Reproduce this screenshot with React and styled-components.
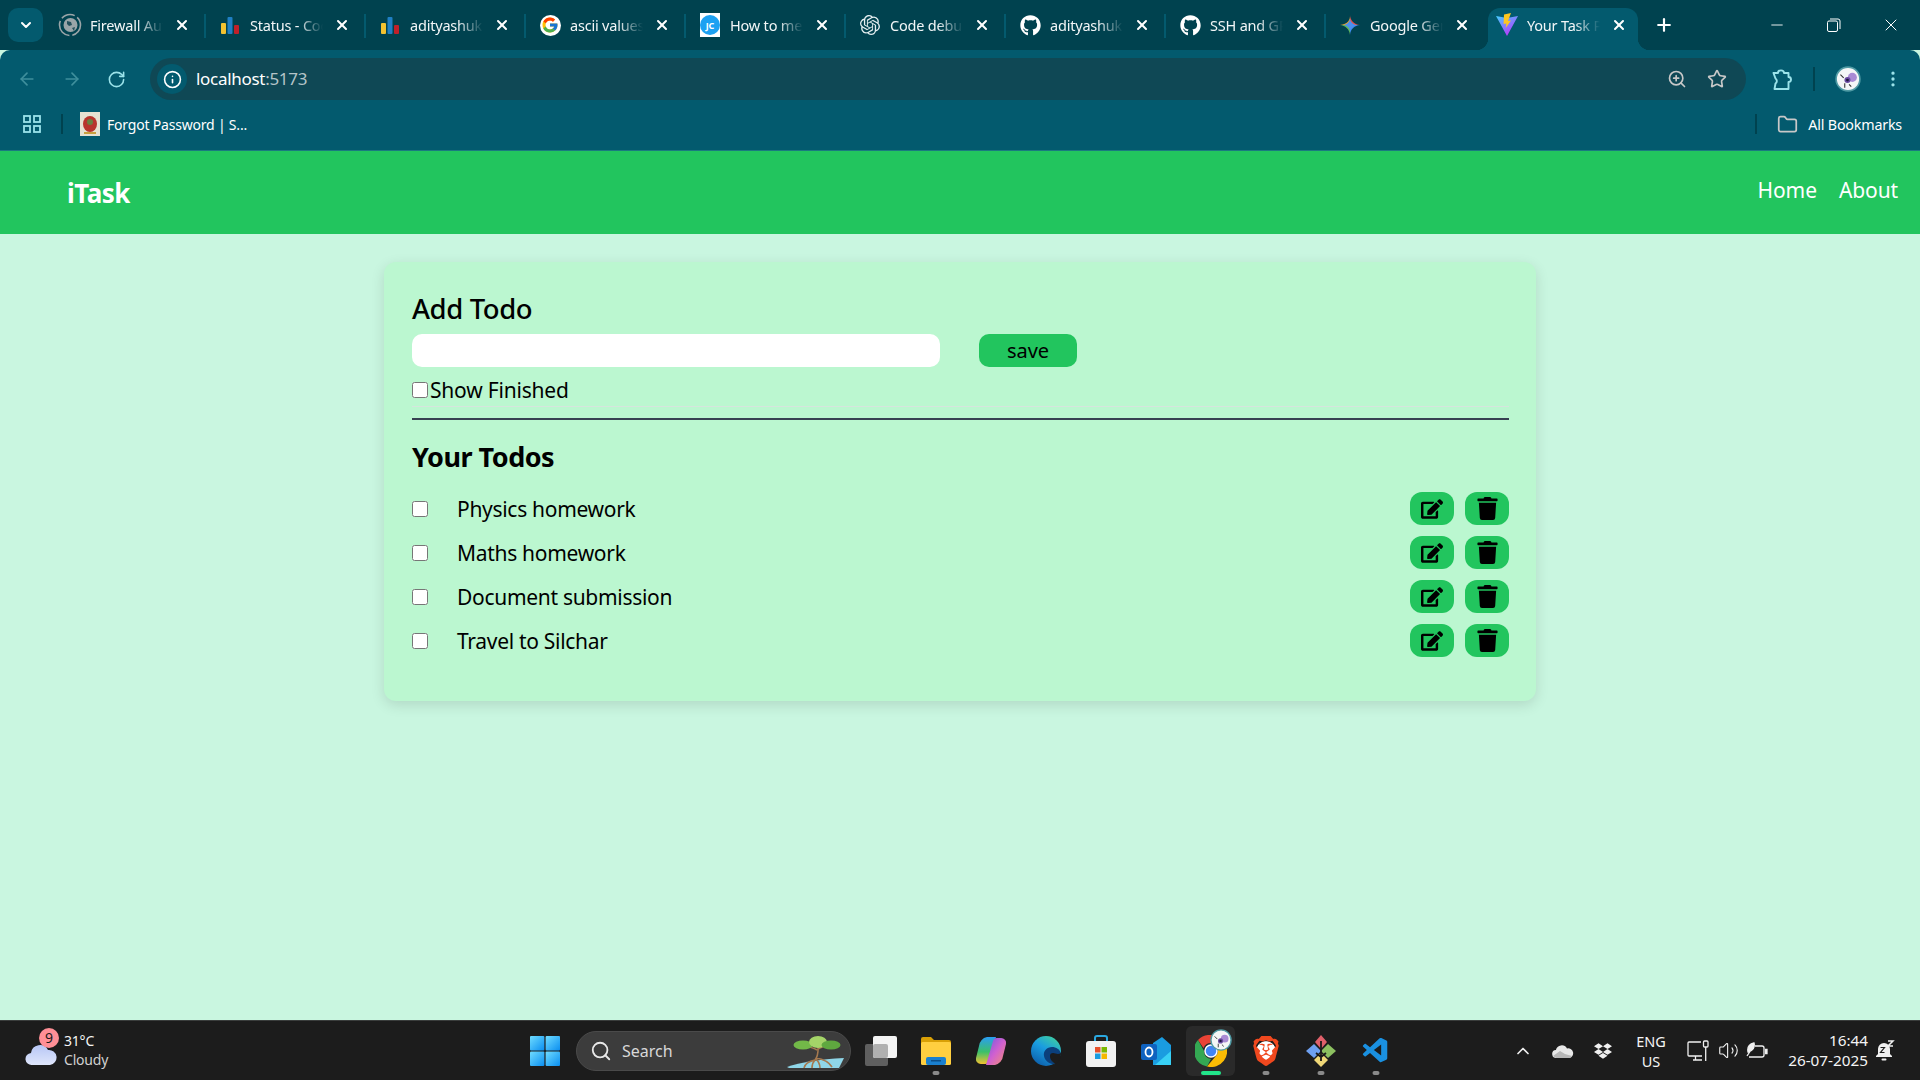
import styled, { createGlobalStyle } from 'styled-components';
import { FaGithub, FaEdit, FaTrash, FaDropbox } from 'react-icons/fa';
import { FcGoogle } from 'react-icons/fc';
import { SiOpenai, SiBrave } from 'react-icons/si';
import { VscVscode } from 'react-icons/vsc';
import {
  ArrowLeft,
  ArrowRight,
  RotateCw,
  Info,
  ZoomIn,
  Star,
  EllipsisVertical,
  Folder,
  X,
  Plus,
  Minus,
  ChevronDown,
  ChevronUp,
  Search,
  Volume2,
} from 'lucide-react';

const GlobalStyle = createGlobalStyle`
  html, body {
    margin: 0;
    padding: 0;
    height: 100%;
    overflow: hidden;
  }
  * {
    box-sizing: border-box;
  }
  body {
    font-family: "Noto Sans", "Open Sans", "Liberation Sans", sans-serif;
  }
`;

const FirewallIcon = () => (
  <svg width="24" height="24" viewBox="0 0 24 24">
    <circle cx="12" cy="12" r="10.5" fill="none" stroke="#9aa5a8" strokeWidth="1.6" strokeDasharray="14 3 20 3" />
    <circle cx="12.5" cy="12" r="7" fill="#9aa5a8" />
    <path d="M9 8l4 1 1 3-3 1-2-2zM14 15l3-1-1 4z" fill="#24505c" />
  </svg>
);

const BarsIcon = () => (
  <svg width="20" height="20" viewBox="0 0 20 20">
    <rect x="1" y="8" width="5" height="11" rx="1" fill="#f2c230" />
    <rect x="7.5" y="2" width="5" height="17" rx="1" fill="#1f7fc4" />
    <rect x="14" y="10" width="5" height="9" rx="1" fill="#c0202a" />
  </svg>
);

const GoogleIcon = () => (
  <GoogleBadge>
    <FcGoogle size={18} />
  </GoogleBadge>
);

const JcIcon = () => (
  <JcBadge>
    <JcCircle>JC</JcCircle>
  </JcBadge>
);

const GeminiIcon = () => (
  <svg width="20" height="20" viewBox="0 0 20 20">
    <path d="M10 0C10.3 5 8 9 0 10h10z" fill="#e8a030" />
    <path d="M10 0C10 5 14 9.500 20 10H10z" fill="#e2504a" />
    <path d="M0 10c5 .5 9.500 4 10 10V10z" fill="#5fb85a" />
    <path d="M20 10c-5.500.5-9.500 4-10 10V10z" fill="#3f8ef0" />
    <path d="M10 4c.5 3 3 5.500 6 6-3 .5-5.500 3-6 6-.5-3-3-5.500-6-6 3-.5 5.500-3 6-6z" fill="#4a90f0" />
  </svg>
);

const ViteIcon = () => (
  <svg width="22" height="24" viewBox="0 0 22 24">
    <defs>
      <linearGradient id="vite" x1="0" y1="0" x2="0.6" y2="1">
        <stop offset="0" stopColor="#41d1ff" />
        <stop offset="1" stopColor="#bd34fe" />
      </linearGradient>
    </defs>
    <path d="M0 3l11 2 11-2-11 20z" fill="url(#vite)" />
    <path d="M15 0L8 1.5 7.6 11l2.8-.5-.7 4.5L15 7.500l-3 .5z" fill="#ffc61f" />
  </svg>
);

const tabs = [
  { title: 'Firewall Authentication', icon: <FirewallIcon /> },
  { title: 'Status - Codeforces', icon: <BarsIcon /> },
  { title: 'adityashukla', icon: <BarsIcon /> },
  { title: 'ascii values in c', icon: <GoogleIcon /> },
  { title: 'How to merge', icon: <JcIcon /> },
  { title: 'Code debugging', icon: <SiOpenai size={20} color="#e4eef0" /> },
  { title: 'adityashukla', icon: <FaGithub size={21} color="#fff" /> },
  { title: 'SSH and GPG', icon: <FaGithub size={21} color="#fff" /> },
  { title: 'Google Gemini', icon: <GeminiIcon />, noDivider: true },
  { title: 'Your Task Planner', icon: <ViteIcon />, active: true, noDivider: true },
];

const todos = ['Physics homework', 'Maths homework', 'Document submission', 'Travel to Silchar'];

const WindowsLogo = () => (
  <svg width="30" height="30" viewBox="0 0 30 30">
    <defs>
      <linearGradient id="win" x1="0" y1="0" x2="1" y2="1">
        <stop offset="0" stopColor="#6fdcff" />
        <stop offset="1" stopColor="#0a8ef0" />
      </linearGradient>
    </defs>
    <rect x="0" y="0" width="14.4" height="14.4" rx="1" fill="url(#win)" />
    <rect x="15.6" y="0" width="14.4" height="14.4" rx="1" fill="url(#win)" />
    <rect x="0" y="15.6" width="14.4" height="14.4" rx="1" fill="url(#win)" />
    <rect x="15.6" y="15.6" width="14.4" height="14.4" rx="1" fill="url(#win)" />
  </svg>
);

const WeatherCloud = () => (
  <svg width="32" height="26" viewBox="0 0 32 26">
    <defs>
      <linearGradient id="cloud" x1="0" y1="0" x2="0" y2="1">
        <stop offset="0" stopColor="#b7c6f5" />
        <stop offset="1" stopColor="#dfe6fb" />
      </linearGradient>
    </defs>
    <path d="M7 25a6 6 0 0 1-1-12 9 9 0 0 1 17-3 7.500 7.500 0 0 1 2 15z" fill="url(#cloud)" />
  </svg>
);

const TreeArt = () => (
  <TreeSvg width="63" height="32" viewBox="0 0 63 32">
    <path d="M0 31Q20 24 57 22L52 32H2z" fill="#8fd6e8" />
    <path
      d="M31 9c0 6 1 10-3 15M28 24c-5 1-10 3-11 8M28 24c-2 2-3 5-3 8M29 22c6 1 13 4 16 9M29 23c2 2 4 5 4 9M30 14c-3-2-7-3-12-4M31 13c3-2 7-3 11-4"
      stroke="#a5794f"
      strokeWidth="1.600"
      fill="none"
    />
    <ellipse cx="16" cy="9" rx="9.500" ry="4.500" fill="#72b848" />
    <ellipse cx="31" cy="6" rx="9" ry="6" fill="#a4d468" />
    <ellipse cx="44" cy="9" rx="9.500" ry="4.500" fill="#5fa83f" />
  </TreeSvg>
);

const TaskViewIcon = () => (
  <svg width="32" height="30" viewBox="0 0 32 30">
    <rect x="0" y="8" width="23" height="22" rx="2" fill="#5f5f5f" />
    <rect x="8" y="0" width="24" height="22" rx="2" fill="#f4f4f4" />
    <rect x="8" y="8" width="15" height="14" rx="2" fill="#b0b0b0" />
  </svg>
);

const ExplorerIcon = () => (
  <svg width="30" height="28" viewBox="0 0 30 28">
    <path d="M0 2a2 2 0 0 1 2-2h8l3 3h15a2 2 0 0 1 2 2v3H0z" fill="#d9a006" />
    <rect x="0" y="5" width="30" height="23" rx="1.500" fill="#ffcf40" />
    <rect x="5" y="20" width="20" height="8" rx="2" fill="#1a80cf" />
    <rect x="10" y="23" width="10" height="1.500" fill="#0b4f8a" />
  </svg>
);

const CopilotIcon = () => (
  <svg width="30" height="28" viewBox="0 0 30 28">
    <defs>
      <linearGradient id="cop1" x1="0" y1="0" x2="0" y2="1">
        <stop offset="0" stopColor="#2a9df4" />
        <stop offset="0.55" stopColor="#3bc06a" />
        <stop offset="1" stopColor="#f2c230" />
      </linearGradient>
      <linearGradient id="cop2" x1="0" y1="0" x2="1" y2="1">
        <stop offset="0" stopColor="#6a5ae0" />
        <stop offset="0.5" stopColor="#d060d0" />
        <stop offset="1" stopColor="#f59070" />
      </linearGradient>
    </defs>
    <path d="M11 0h9l-7 24a4 4 0 0 1-4 3H5a5 5 0 0 1-5-6l3-12a10 10 0 0 1 8-9z" fill="url(#cop1)" />
    <path d="M19 28h-9l7-24a4 4 0 0 1 4-3h4a5 5 0 0 1 5 6l-3 12a10 10 0 0 1-8 9z" fill="url(#cop2)" />
  </svg>
);

const EdgeIcon = () => (
  <svg width="30" height="30" viewBox="0 0 30 30">
    <defs>
      <linearGradient id="edge" x1="0.8" y1="0" x2="0.2" y2="1">
        <stop offset="0" stopColor="#3fd0a0" />
        <stop offset="0.45" stopColor="#1a9ce0" />
        <stop offset="1" stopColor="#0c5ca8" />
      </linearGradient>
    </defs>
    <circle cx="15" cy="15" r="15" fill="url(#edge)" />
    <path d="M30 18c-1-5-5-7-9-7-5 0-9 4-8 9 1 5 6 9 12 8-2 0-5-3-5-7 0-2 1-3 3-3 3 0 4 2 7 0z" fill="#0b3f7c" />
    <path d="M30 16c0 1-1 2-3 2-2 0-3-1-5-1s-3 1-3 3c0 4 3 7 6 8a15 15 0 0 0 5-12z" fill="#1c1c1c" />
  </svg>
);

const StoreIcon = () => (
  <svg width="30" height="32" viewBox="0 0 30 32">
    <path d="M9 8V3a2 2 0 0 1 2-2h8a2 2 0 0 1 2 2v5" fill="none" stroke="#2aa8e0" strokeWidth="2" />
    <rect x="0" y="6" width="30" height="26" rx="3" fill="#f2f2f2" />
    <rect x="9" y="12" width="5.500" height="5.500" fill="#e8502a" />
    <rect x="15.500" y="12" width="5.500" height="5.500" fill="#7ab800" />
    <rect x="9" y="18.500" width="5.500" height="5.500" fill="#1a9ce0" />
    <rect x="15.500" y="18.500" width="5.500" height="5.500" fill="#f5b800" />
  </svg>
);

const OutlookIcon = () => (
  <svg width="30" height="28" viewBox="0 0 30 28">
    <path d="M12 6l9-6 9 8v20H12z" fill="#1a9ce0" />
    <path d="M14 28l16-14v14z" fill="#38d0f5" />
    <rect x="0" y="7" width="16" height="16" rx="2" fill="#0f62c0" />
    <ellipse cx="8" cy="15" rx="3.500" ry="4.500" fill="none" stroke="#fff" strokeWidth="1.800" />
  </svg>
);

const ChromeIcon = () => (
  <svg width="32" height="32" viewBox="0 0 32 32">
    <path d="M16 0a16 16 0 0 1 14 8H16a8 8 0 0 0-7.500 5L3 5A16 16 0 0 1 16 0z" fill="#ea4335" />
    <path d="M3 5l6 11a7.500 7.500 0 0 0 7 8l-4 7.500A16 16 0 0 1 3 5z" fill="#34a853" />
    <path d="M30 8a16 16 0 0 1-18 23.500L20 22a8 8 0 0 0 3-6 8 8 0 0 0-3-8z" fill="#fbbc04" />
    <circle cx="16" cy="16" r="6" fill="#4285f4" stroke="#fff" strokeWidth="1.500" />
  </svg>
);

const AvatarIcon = ({ size }) => (
  <svg width={size} height={size} viewBox="0 0 24 24">
    <circle cx="12" cy="12" r="11" fill="#f4f6f7" stroke="#4f9aa4" strokeWidth="1.500" />
    <circle cx="16" cy="10.500" r="4.200" fill="#a98bd4" />
    <circle cx="11.500" cy="13" r="2.800" fill="#6a4aa0" />
    <circle cx="11.500" cy="13" r="1.300" fill="#1e1640" />
    <path d="M5 8l3 3M9 16v4M13 17l2 2" stroke="#333" strokeWidth="1" fill="none" />
  </svg>
);

const KrakenIcon = () => (
  <svg width="30" height="32" viewBox="0 0 30 32">
    <path d="M15 0l6 7-6 7-6-7z" fill="#e0606a" />
    <path d="M8 9l7 7-7 7-8-7z" fill="#6ea0f0" />
    <path d="M22 9l8 7-8 7-7-7z" fill="#8cc060" />
    <path d="M15 18l7 7-7 7-7-7z" fill="#f0d878" />
    <path d="M15 6v20M10 18l5 4 5-4" stroke="#1a1a1a" strokeWidth="1.800" fill="none" />
  </svg>
);

const OneDriveIcon = () => (
  <svg width="22" height="14" viewBox="0 0 22 14">
    <path d="M4.500 14a4 4 0 0 1-.6-8A6 6 0 0 1 15 4.500 4.800 4.800 0 0 1 17.500 14z" fill="#e8e8e8" />
    <path d="M1 12l7-5 5 3 7 2-2 2H4z" fill="#b8b8b8" />
  </svg>
);

const NetworkIcon = () => (
  <svg width="22" height="22" viewBox="0 0 22 22" fill="none" stroke="#f0f0f0" strokeWidth="1.300">
    <path d="M14 2H2a1 1 0 0 0-1 1v12a1 1 0 0 0 1 1h13" />
    <path d="M6 20h9M8.500 16v4" />
    <rect x="16.500" y="1" width="4.500" height="6" rx="1" />
    <path d="M18.700 7v14" />
  </svg>
);

const BatteryLeafIcon = () => (
  <svg width="22" height="18" viewBox="0 0 22 18" fill="none" stroke="#f0f0f0" strokeWidth="1.300">
    <path d="M9 4h7a2 2 0 0 1 2 2v7a2 2 0 0 1-2 2H3" />
    <path d="M19 7.500h2v4h-2" fill="#f0f0f0" />
    <path d="M2 10C1 5 4 2 8 1c1 4-1 8-6 9zM1 14L7 5" fill="#f0f0f0" />
  </svg>
);

const SnoozeBellIcon = () => (
  <svg width="20" height="22" viewBox="0 0 20 22">
    <path d="M9 3a6 6 0 0 1 6 6v5l2 2v1H1v-1l2-2V9a6 6 0 0 1 6-6z" fill="#f0f0f0" />
    <rect x="6.500" y="18.500" width="5" height="2" rx="1" fill="#f0f0f0" />
    <path d="M5.500 7.500h4l-4 5h4" stroke="#1c1c1c" strokeWidth="1.200" fill="none" />
    <path d="M13 1h5l-5 5h5" stroke="#f0f0f0" strokeWidth="1.500" fill="none" />
  </svg>
);

const GridIcon = () => (
  <svg width="18" height="18" viewBox="0 0 18 18" fill="none" stroke="#9be3ea" strokeWidth="1.800">
    <rect x="1" y="1" width="6" height="6" />
    <rect x="11" y="1" width="6" height="6" />
    <rect x="1" y="11" width="6" height="6" />
    <rect x="11" y="11" width="6" height="6" />
  </svg>
);

const CrestIcon = () => (
  <svg width="20" height="24" viewBox="0 0 20 24">
    <rect width="20" height="24" fill="#e6e2d2" />
    <ellipse cx="10" cy="12" rx="7" ry="8" fill="#b8342c" />
    <circle cx="10" cy="10" r="3" fill="#6a8040" />
    <rect x="4" y="20" width="12" height="2" fill="#c8a040" />
  </svg>
);

const ExtensionIcon = () => (
  <svg width="24" height="24" viewBox="0 0 24 24" fill="none" stroke="#9be3ea" strokeWidth="1.900" strokeLinejoin="round">
    <path d="M4.500 6H9a3 2.600 0 0 1 6 0h4.500v4a2.500 2.500 0 0 1 0 5v7H5.500l1-5.500a3 3 0 0 0 0-5z" />
  </svg>
);

const RestoreIcon = () => (
  <svg width="14" height="14" viewBox="0 0 14 14" fill="none" stroke="#fff" strokeWidth="1">
    <rect x="0.500" y="3" width="10" height="10.500" rx="1.500" />
    <path d="M3 1h8a2 2 0 0 1 2 2v8" />
  </svg>
);

const App = () => {
  return (
    <Page>
      <GlobalStyle />
      <TabStrip>
        <TabMenu>
          <ChevronDown size={16} strokeWidth={3} color="#fff" />
        </TabMenu>
        {tabs.map((tab, i) => (
          <Tab key={i} $active={tab.active} $noDivider={tab.noDivider}>
            <TabIcon>{tab.icon}</TabIcon>
            <TabTitle>{tab.title}</TabTitle>
            <X size={16} strokeWidth={3} color="#fff" />
          </Tab>
        ))}
        <NewTab>
          <Plus size={20} strokeWidth={2.6} color="#fff" />
        </NewTab>
        <WindowControls>
          <WindowButton>
            <Minus size={18} strokeWidth={1.2} color="#fff" />
          </WindowButton>
          <WindowButton>
            <RestoreIcon />
          </WindowButton>
          <WindowButton>
            <X size={20} strokeWidth={1.2} color="#fff" />
          </WindowButton>
        </WindowControls>
      </TabStrip>

      <Toolbar>
        <ToolButton>
          <ArrowLeft size={20} color="#3f8f9c" />
        </ToolButton>
        <ToolButton>
          <ArrowRight size={20} color="#3f8f9c" />
        </ToolButton>
        <ToolButton>
          <RotateCw size={19} color="#9be3ea" />
        </ToolButton>
        <AddressBar>
          <SiteInfo>
            <Info size={19} color="#fff" />
          </SiteInfo>
          <Url>
            localhost<UrlPort>:5173</UrlPort>
          </Url>
          <AddressActions>
            <ZoomIn size={20} color="#c8c8c8" />
            <Star size={20} color="#c8c8c8" />
          </AddressActions>
        </AddressBar>
        <ExtensionButton>
          <ExtensionIcon />
        </ExtensionButton>
        <ToolDivider />
        <AvatarButton>
          <AvatarIcon size={26} />
        </AvatarButton>
        <MenuButton>
          <EllipsisVertical size={20} color="#9be3ea" />
        </MenuButton>
      </Toolbar>

      <BookmarksBar>
        <GridIcon />
        <BookmarkDivider />
        <Bookmark>
          <CrestIcon />
          Forgot Password | S...
        </Bookmark>
        <AllBookmarks>
          <BookmarkDivider />
          <Folder size={21} color="#c8c8c8" />
          All Bookmarks
        </AllBookmarks>
      </BookmarksBar>

      <NavBar>
        <Logo>iTask</Logo>
        <NavLinks>
          <NavLink>Home</NavLink>
          <NavLink>About</NavLink>
        </NavLinks>
      </NavBar>

      <Main>
        <Card>
          <AddTitle>Add Todo</AddTitle>
          <AddRow>
            <TodoInput type="text" />
            <SaveButton>save</SaveButton>
          </AddRow>
          <FinishedRow>
            <Check type="checkbox" />
            Show Finished
          </FinishedRow>
          <Divider />
          <TodosTitle>Your Todos</TodosTitle>
          <TodoList>
            {todos.map((todo) => (
              <TodoRow key={todo}>
                <Check type="checkbox" />
                <TodoText>{todo}</TodoText>
                <TodoActions>
                  <IconButton>
                    <FaEdit size={22} />
                  </IconButton>
                  <IconButton>
                    <FaTrash size={23} />
                  </IconButton>
                </TodoActions>
              </TodoRow>
            ))}
          </TodoList>
        </Card>
      </Main>

      <Taskbar>
        <Weather>
          <CloudWrap>
            <WeatherCloud />
            <WeatherBadge>9</WeatherBadge>
          </CloudWrap>
          <WeatherText>
            <span>31°C</span>
            <WeatherSub>Cloudy</WeatherSub>
          </WeatherText>
        </Weather>
        <TaskSlot>
          <WindowsLogo />
        </TaskSlot>
        <SearchPill>
          <Search size={22} color="#e8e8e8" />
          <SearchText>Search</SearchText>
          <TreeArt />
        </SearchPill>
        <TaskIcons>
          <TaskSlot>
            <TaskViewIcon />
          </TaskSlot>
          <TaskSlot $dot>
            <ExplorerIcon />
          </TaskSlot>
          <TaskSlot>
            <CopilotIcon />
          </TaskSlot>
          <TaskSlot>
            <EdgeIcon />
          </TaskSlot>
          <TaskSlot>
            <StoreIcon />
          </TaskSlot>
          <TaskSlot>
            <OutlookIcon />
          </TaskSlot>
          <TaskSlot $running>
            <ChromeIcon />
            <ChromeAvatar>
              <AvatarIcon size={22} />
            </ChromeAvatar>
          </TaskSlot>
          <TaskSlot $dot>
            <BraveFace>
              <SiBrave size={30} color="#f0481e" />
            </BraveFace>
          </TaskSlot>
          <TaskSlot $dot>
            <KrakenIcon />
          </TaskSlot>
          <TaskSlot $dot>
            <VscVscode size={30} color="#1a90e0" />
          </TaskSlot>
        </TaskIcons>
        <Tray>
          <TraySlot $width={40}>
            <ChevronUp size={20} color="#f0f0f0" />
          </TraySlot>
          <TraySlot $width={40}>
            <OneDriveIcon />
          </TraySlot>
          <TraySlot $width={40}>
            <FaDropbox size={18} color="#f0f0f0" />
          </TraySlot>
          <Lang>
            <span>ENG</span>
            <span>US</span>
          </Lang>
          <TraySlot $width={30}>
            <NetworkIcon />
          </TraySlot>
          <TraySlot $width={30}>
            <Volume2 size={21} strokeWidth={1.3} color="#f0f0f0" />
          </TraySlot>
          <TraySlot $width={28}>
            <BatteryLeafIcon />
          </TraySlot>
          <Clock>
            <span>16:44</span>
            <span>26-07-2025</span>
          </Clock>
          <TraySlot $width={30}>
            <SnoozeBellIcon />
          </TraySlot>
        </Tray>
      </Taskbar>
    </Page>
  );
};

export default App;

const Page = styled.div`
  display: flex;
  flex-direction: column;
  height: 1080px;
  width: 1920px;
  overflow: hidden;
  background: #c9f6e0;
`;

const TabStrip = styled.div`
  display: flex;
  align-items: flex-end;
  height: 50px;
  padding-left: 8px;
  background: #00424f;
  color: #fff;
`;

const TabMenu = styled.div`
  display: flex;
  align-items: center;
  justify-content: center;
  align-self: flex-start;
  width: 35px;
  height: 34px;
  margin-top: 8px;
  margin-right: 3px;
  border-radius: 10px;
  background: #035a6e;
`;

const Tab = styled.div`
  position: relative;
  display: flex;
  align-items: center;
  width: 160px;
  height: 42px;
  padding: 0 16px 8px 12px;
  font-size: 14.5px;
  letter-spacing: -0.2px;
  border-radius: 12px 12px 0 0;

  &::after {
    content: '';
    display: ${(p) => (p.$noDivider ? 'none' : 'block')};
    position: absolute;
    right: 0;
    top: 6px;
    height: 24px;
    width: 2px;
    background: #035a6e;
  }

  ${(p) =>
    p.$active &&
    `
    width: 150px;
    margin-left: 2px;
    padding: 0 11px 8px 7px;
    background: #035a6e;

    &::before,
    &::after {
      content: '';
      display: block;
      position: absolute;
      top: auto;
      bottom: 0;
      width: 12px;
      height: 12px;
    }
    &::before {
      left: -12px;
      right: auto;
      background: radial-gradient(circle at 0 0, transparent 12px, #035a6e 12.5px);
    }
    &::after {
      right: -12px;
      background: radial-gradient(circle at 100% 0, transparent 12px, #035a6e 12.5px);
    }
  `}
`;

const TabIcon = styled.span`
  display: flex;
  align-items: center;
  justify-content: center;
  flex: none;
  width: 24px;
  height: 24px;
  margin-right: 8px;
`;

const TabTitle = styled.span`
  flex: 1;
  white-space: nowrap;
  overflow: hidden;
  margin-right: 11px;
  color: #f2f6f7;
  -webkit-mask-image: linear-gradient(to right, #000 65%, transparent);
  mask-image: linear-gradient(to right, #000 65%, transparent);
`;

const GoogleBadge = styled.span`
  display: flex;
  align-items: center;
  justify-content: center;
  width: 21px;
  height: 21px;
  border-radius: 50%;
  background: #fff;
`;

const JcBadge = styled.span`
  display: flex;
  align-items: center;
  justify-content: center;
  width: 20px;
  height: 24px;
  background: #fff;
`;

const JcCircle = styled.span`
  display: flex;
  align-items: center;
  justify-content: center;
  width: 20px;
  height: 20px;
  border-radius: 50%;
  background: #1da1f2;
  color: #fff;
  font-size: 9px;
  font-weight: 700;
`;

const NewTab = styled.div`
  display: flex;
  align-items: center;
  justify-content: center;
  align-self: flex-start;
  width: 30px;
  height: 30px;
  margin-top: 10px;
  margin-left: 11px;
`;

const WindowControls = styled.div`
  display: flex;
  align-items: center;
  align-self: flex-start;
  height: 50px;
  margin-left: auto;
  padding-right: 1px;
`;

const WindowButton = styled.div`
  display: flex;
  align-items: center;
  justify-content: center;
  width: 57px;
  height: 50px;
`;

const Toolbar = styled.div`
  display: flex;
  align-items: center;
  height: 50px;
  padding-top: 8px;
  padding-left: 4px;
  background: #035a6e;
  border-top-right-radius: 10px;
  border-top-left-radius: 10px;
`;

const ToolButton = styled.div`
  display: flex;
  align-items: center;
  justify-content: center;
  flex: none;
  width: 45px;
  height: 42px;
`;

const AddressBar = styled.div`
  display: flex;
  align-items: center;
  width: 1596px;
  height: 42px;
  margin-left: 11px;
  padding: 0 19px 0 7px;
  border-radius: 21px;
  background: #0f4855;
`;

const SiteInfo = styled.div`
  display: flex;
  align-items: center;
  justify-content: center;
  flex: none;
  width: 30px;
  height: 30px;
  border-radius: 50%;
  background: #035a6e;
`;

const Url = styled.div`
  margin-left: 9px;
  margin-bottom: 2px;
  font-size: 17px;
  letter-spacing: -0.3px;
  color: #fff;
`;

const UrlPort = styled.span`
  color: #b4c4c8;
`;

const AddressActions = styled.div`
  display: flex;
  align-items: center;
  gap: 20px;
  margin-left: auto;
`;

const ExtensionButton = styled.div`
  display: flex;
  justify-content: center;
  width: 44px;
  margin-left: 13px;
`;

const ToolDivider = styled.div`
  width: 2px;
  height: 24px;
  margin-left: 10px;
  background: #00424f;
`;

const AvatarButton = styled.div`
  display: flex;
  margin-left: 20px;
`;

const MenuButton = styled.div`
  display: flex;
  margin-left: 22px;
`;

const BookmarksBar = styled.div`
  display: flex;
  align-items: center;
  height: 51px;
  padding: 0 18px 2px 23px;
  background: #035a6e;
  border-bottom: 1px solid #1a7a80;
  font-size: 14px;
  letter-spacing: -0.2px;
  color: #fff;
`;

const BookmarkDivider = styled.div`
  width: 2px;
  height: 20px;
  margin: 0 10px 0 20px;
  background: #00424f;
`;

const Bookmark = styled.div`
  display: flex;
  align-items: center;
  gap: 7px;
  margin-left: 7px;
`;

const AllBookmarks = styled.div`
  display: flex;
  align-items: center;
  gap: 10px;
  margin-left: auto;
  font-size: 14.3px;
`;

const NavBar = styled.nav`
  display: flex;
  align-items: center;
  justify-content: space-between;
  flex: none;
  height: 83px;
  padding: 0 22px 0 67px;
  background: #22c55e;
  color: #fff;
`;

const Logo = styled.span`
  font-size: 26px;
  font-weight: 700;
  letter-spacing: -0.5px;
`;

const NavLinks = styled.ul`
  display: flex;
  gap: 22px;
  margin: 0 0 6px;
  padding: 0;
  list-style: none;
`;

const NavLink = styled.li`
  font-size: 21px;
  letter-spacing: -0.1px;
`;

const Main = styled.main`
  flex: 1;
  padding-top: 28px;
`;

const Card = styled.section`
  width: 1152px;
  height: 439px;
  margin: 0 auto;
  padding: 27px 27px 0 28px;
  border-radius: 12px;
  background: #bbf7d0;
  box-shadow: 0 4px 14px rgba(0, 0, 0, 0.12);
  color: #000;
`;

const AddTitle = styled.h2`
  margin: 0 0 5px;
  font-size: 27.5px;
  line-height: 40px;
  font-weight: 500;
  letter-spacing: -0.4px;
`;

const AddRow = styled.div`
  display: flex;
  align-items: center;
`;

const TodoInput = styled.input`
  width: 528px;
  height: 33px;
  border: 0;
  border-radius: 10px;
  background: #fff;
`;

const SaveButton = styled.button`
  width: 98px;
  height: 33px;
  margin-left: 39px;
  border: 0;
  border-radius: 10px;
  background: #22c55e;
  font-family: inherit;
  font-size: 20px;
  line-height: 1;
  color: #000;
`;

const FinishedRow = styled.label`
  display: flex;
  align-items: center;
  gap: 2px;
  height: 34px;
  margin-top: 6px;
  border-bottom: 1px solid #d5e5dd;
  font-size: 21px;
  letter-spacing: -0.2px;
`;

const Check = styled.input`
  flex: none;
  width: 16px;
  height: 16px;
  margin: 0;
`;

const Divider = styled.hr`
  height: 2px;
  margin: 11px 0 0;
  border: 0;
  background: #374151;
`;

const TodosTitle = styled.h2`
  margin: 17px 0 0;
  font-size: 27px;
  line-height: 40px;
  font-weight: 700;
  letter-spacing: -0.5px;
`;

const TodoList = styled.div`
  display: flex;
  flex-direction: column;
  gap: 11px;
  margin-top: 15px;
`;

const TodoRow = styled.div`
  display: flex;
  align-items: center;
  height: 33px;
`;

const TodoText = styled.span`
  margin-left: 29px;
  font-size: 21px;
  letter-spacing: -0.3px;
`;

const TodoActions = styled.div`
  display: flex;
  gap: 11px;
  margin-left: auto;
`;

const IconButton = styled.button`
  display: flex;
  align-items: center;
  justify-content: center;
  width: 44px;
  height: 33px;
  padding: 0;
  border: 0;
  border-radius: 12px;
  background: #22c55e;
  color: #000;
`;

const Taskbar = styled.footer`
  display: flex;
  align-items: center;
  flex: none;
  height: 60px;
  padding-left: 25px;
  background: #1c1c1c;
  border-top: 1px solid #3a3d3c;
  color: #f4f4f4;
`;

const Weather = styled.div`
  display: flex;
  align-items: center;
  flex: none;
  width: 492px;
`;

const CloudWrap = styled.div`
  position: relative;
  display: flex;
  width: 32px;
  margin-top: 4px;
`;

const WeatherBadge = styled.span`
  position: absolute;
  top: -12px;
  left: 14px;
  width: 20px;
  height: 20px;
  border-radius: 50%;
  background: #ff8f96;
  color: #1a1a1a;
  font-size: 14px;
  line-height: 20px;
  text-align: center;
`;

const WeatherText = styled.div`
  display: flex;
  flex-direction: column;
  margin-left: 7px;
  padding-bottom: 2px;
  font-size: 14px;
  line-height: 19px;
  letter-spacing: -0.2px;
`;

const WeatherSub = styled.span`
  color: #d0d0d0;
`;

const TaskSlot = styled.div`
  position: relative;
  display: flex;
  align-items: center;
  justify-content: center;
  flex: none;
  width: 55px;
  height: 50px;
  ${(p) => p.$running && 'background: #2a2a2a; border-radius: 6px; width: 49px; margin: 0 3px;'}

  &::after {
    content: '';
    display: ${(p) => (p.$dot || p.$running ? 'block' : 'none')};
    position: absolute;
    bottom: 1px;
    left: 50%;
    transform: translateX(-50%);
    width: ${(p) => (p.$running ? '20px' : '7px')};
    height: 4px;
    border-radius: 2px;
    background: ${(p) => (p.$running ? '#22e58a' : '#8a8a8a')};
  }
`;

const ChromeAvatar = styled.span`
  position: absolute;
  top: 3px;
  right: 3px;
  display: flex;
`;

const BraveFace = styled.span`
  display: flex;
  background: radial-gradient(circle at 50% 50%, #fff 44%, transparent 48%);
`;

const SearchPill = styled.div`
  display: flex;
  align-items: center;
  flex: none;
  width: 275px;
  height: 40px;
  margin-left: 4px;
  padding-left: 13px;
  border-radius: 20px;
  background: #3c3c3c;
  border: 1px solid #4a4a4a;
  overflow: hidden;
`;

const SearchText = styled.span`
  flex: 1;
  margin-left: 10px;
  font-size: 16px;
  color: #d8d8d8;
`;

const TreeSvg = styled.svg`
  flex: none;
  align-self: flex-end;
  margin-bottom: 2px;
`;

const TaskIcons = styled.div`
  display: flex;
  align-items: center;
  margin-left: 2px;
`;

const Tray = styled.div`
  display: flex;
  align-items: center;
  margin-left: auto;
  padding-right: 20px;
`;

const TraySlot = styled.div`
  display: flex;
  align-items: center;
  justify-content: center;
  width: ${(p) => p.$width}px;
`;

const Lang = styled.div`
  display: flex;
  flex-direction: column;
  align-items: center;
  width: 56px;
  margin-right: 4px;
  font-size: 14.500px;
  line-height: 20px;
`;

const Clock = styled.div`
  display: flex;
  flex-direction: column;
  align-items: flex-end;
  width: 97px;
  margin-right: 2px;
  padding-bottom: 1px;
  font-size: 15.3px;
  line-height: 20px;
`;
